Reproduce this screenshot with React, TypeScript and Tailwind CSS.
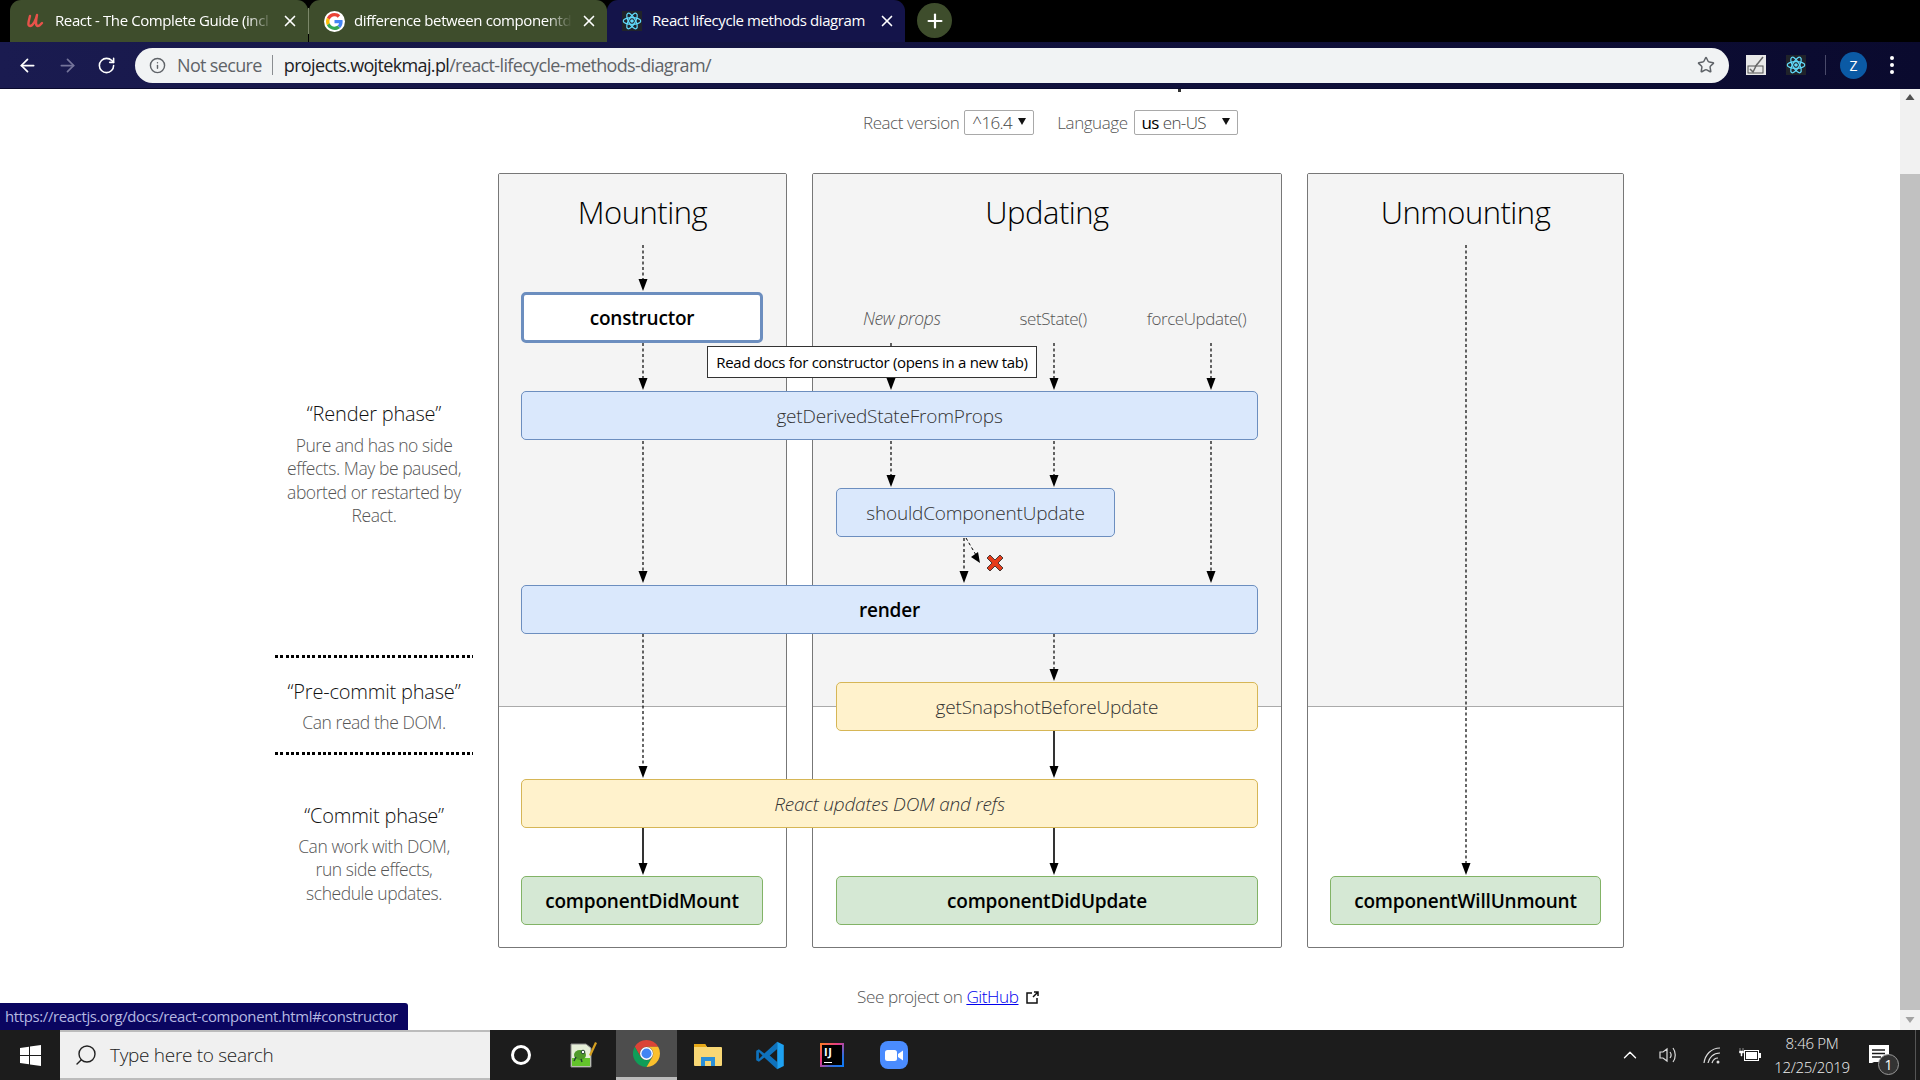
import React from "react";
import { ArrowLeft, ArrowRight, RotateCw, Info, Star, Search, ChevronUp, X, Plus } from "lucide-react";

const font = "font-['Open_Sans','Noto_Sans',sans-serif]";

function Atom({ size = 20 }: { size?: number }) {
  return (
    <svg width={size} height={size} viewBox="0 0 24 24" fill="none" stroke="#61dafb" strokeWidth="1.5">
      <rect width="24" height="24" fill="#20232a" stroke="none" />
      <circle cx="12" cy="12" r="2.2" fill="#61dafb" stroke="none" />
      <ellipse cx="12" cy="12" rx="10.5" ry="4" />
      <ellipse cx="12" cy="12" rx="10.5" ry="4" transform="rotate(60 12 12)" />
      <ellipse cx="12" cy="12" rx="10.5" ry="4" transform="rotate(120 12 12)" />
    </svg>
  );
}

function GoogleG() {
  return (
    <div className="w-[21px] h-[21px] rounded-full bg-white flex items-center justify-center">
      <svg width="17" height="17" viewBox="0 0 48 48">
        <path fill="#EA4335" d="M24 9.5c3.5 0 6.7 1.2 9.2 3.6l6.9-6.9C35.9 2.4 30.5 0 24 0 14.6 0 6.5 5.4 2.6 13.2l8 6.2C12.5 13.7 17.800 9.500 24 9.500z" />
        <path fill="#4285F4" d="M46.900 24.500c0-1.600-.2-3.100-.4-4.500H24v9h12.900c-.6 3-2.200 5.500-4.700 7.200l7.700 6c4.500-4.200 7-10.300 7-17.700z" />
        <path fill="#FBBC05" d="M10.500 28.600c-.5-1.400-.8-3-.8-4.600s.3-3.200.8-4.600l-8-6.200C.9 16.500 0 20.100 0 24s.9 7.500 2.600 10.800l7.900-6.200z" />
        <path fill="#34A853" d="M24 48c6.500 0 11.900-2.100 15.900-5.800l-7.700-6c-2.200 1.400-4.900 2.300-8.200 2.300-6.200 0-11.500-4.200-13.400-9.900l-8 6.200C6.500 42.600 14.600 48 24 48z" />
      </svg>
    </div>
  );
}

function Tab({ icon, title, active }: { icon: React.ReactNode; title: string; active?: boolean }) {
  return (
    <div className={`w-[298px] h-[42px] flex items-center pl-[15px] pr-[9px] rounded-t-[11px] ${active ? "bg-[#14144a]" : "bg-[#3e4d2c]"}`}>
      <div className="w-[24px] flex items-center shrink-0">{icon}</div>
      <span className={`flex-1 ml-[6px] text-[15px] leading-[20px] mb-[2px] text-white whitespace-nowrap overflow-hidden tracking-[-0.4px] ${active ? "" : "[mask-image:linear-gradient(90deg,#000_88%,transparent)]"}`}>{title}</span>
      <X className="ml-[8px] shrink-0 text-white" size={18} strokeWidth={2.2} />
    </div>
  );
}

function ChromeBar() {
  return (
    <div className={`${font} shrink-0`}>
      <div className="h-[42px] bg-black flex items-start pl-[10px]">
        <div className="flex items-start">
          <Tab
            title="React - The Complete Guide (incl"
            icon={
              <svg width="20" height="20" viewBox="0 0 20 20" fill="none" stroke="#e8524a" strokeWidth="2.4" strokeLinecap="round" strokeLinejoin="round">
                <path d="M5 5c-1 4-3 10 0 10 3 0 6-6 7-11-1 5-2 11 1 11 2 0 3-2 4-3" />
              </svg>
            }
          />
          <div className="w-[1px] h-[26px] mt-[8px] bg-[#7b8769]" />
          <Tab title="difference between componentdi" icon={<GoogleG />} />
          <Tab active title="React lifecycle methods diagram" icon={<Atom size={20} />} />
        </div>
        <div className="ml-[12px] mt-[3px] w-[35px] h-[35px] rounded-full bg-[#3e4d2c] flex items-center justify-center">
          <Plus className="text-white" size={22} strokeWidth={2.4} />
        </div>
      </div>
      <div className="h-[46px] bg-[linear-gradient(90deg,#1a1b50,#0a0a2e)] flex items-center">
        <div className="w-[135px] flex items-center pl-[17px] gap-[19px]">
          <ArrowLeft className="text-white" size={21} strokeWidth={2} />
          <ArrowRight className="text-[#74749a]" size={21} strokeWidth={2} />
          <RotateCw className="text-white" size={19} strokeWidth={2} />
        </div>
        <div className="w-[1594px] h-[35px] rounded-full bg-[#f1f3f4] flex items-center pl-[14px] pr-[14px]">
          <Info className="text-[#5f6368]" size={17} strokeWidth={2} />
          <span className="ml-[11px] text-[#5f6368] text-[18px] tracking-[-0.65px]">Not secure</span>
          <span className="ml-[10px] mr-[11px] w-[1px] h-[20px] bg-[#8a8d91]" />
          <span className="text-[18px] tracking-[-0.65px] text-[#202124]">
            projects.wojtekmaj.pl<span className="text-[#5f6368]">/react-lifecycle-methods-diagram/</span>
          </span>
          <Star className="ml-auto text-[#5f6368]" size={18} strokeWidth={2} />
        </div>
        <div className="flex-1 flex items-center pl-[17px]">
          <svg width="20" height="20" viewBox="0 0 20 20">
            <rect width="20" height="20" fill="#e8e8e8" />
            <rect x="2" y="11" width="15" height="7" fill="none" stroke="#555" />
            <path d="M4 14l3 3 4-8M17 2L9 12" stroke="#666" strokeWidth="1.5" fill="none" />
          </svg>
          <div className="ml-[20px] flex"><Atom size={20} /></div>
          <span className="ml-[19px] w-[1px] h-[20px] bg-[#4a4a6a]" />
          <div className="ml-[14px] w-[27px] h-[27px] rounded-full bg-[#0b5aa5] flex items-center justify-center text-white text-[14px]">Z</div>
          <div className="ml-[23px] flex flex-col gap-[3px]">
            <span className="w-[4px] h-[4px] rounded-full bg-white" />
            <span className="w-[4px] h-[4px] rounded-full bg-white" />
            <span className="w-[4px] h-[4px] rounded-full bg-white" />
          </div>
        </div>
      </div>
      <div className="h-[1px] bg-[#0a0a2e]" />
    </div>
  );
}

const Node = ({ cls, children }: { cls: string; children: React.ReactNode }) => (
  <div className={`${cls} flex items-center justify-center rounded-[5px] border z-10 pt-[2px] text-[19px] tracking-[-0.2px]`}>{children}</div>
);

const blue = "bg-[#dae8fc] border-[#6c8ebf] text-[#333] font-light";
const yellow = "bg-[#fff2cc] border-[#d6b656] text-[#333] font-light";
const green = "bg-[#d5e8d4] border-[#82b366] text-black font-semibold";

function Panel({ cls, title }: { cls: string; title: string }) {
  return (
    <div className={`${cls} row-start-1 row-end-[16] border border-[#777] rounded-[2px] overflow-hidden flex flex-col`}>
      <div className="h-[533px] bg-[#f4f4f4] border-b border-[#aaa] pt-[15px] text-center text-[31px] leading-[46px] font-light text-black tracking-[-0.5px]">{title}</div>
    </div>
  );
}

type A = [number, number, number, boolean?];
const arrows: A[] = [
  [643, 245, 291], [643, 343, 390], [643, 441, 583], [643, 634, 778], [643, 828, 875, true],
  [891, 343, 390], [891, 441, 487], [1054, 343, 390], [1054, 441, 487], [1211, 343, 390], [1211, 441, 583],
  [964, 538, 583], [1054, 634, 681], [1054, 731, 778, true], [1054, 828, 875, true], [1466, 245, 875],
];

function Arrows() {
  return (
    <svg className="absolute left-0 top-0 z-10 pointer-events-none" width="1349" height="775" viewBox="275 173 1349 775">
      {arrows.map(([x, a, b, solid], i) => (
        <g key={i}>
          <line x1={x} y1={a} x2={x} y2={b - 10} stroke="#000" strokeWidth={solid ? 1.6 : 1.2} strokeDasharray={solid ? undefined : "3 2.5"} />
          <path d={`M${x - 4.5} ${b - 12}h9l-4.5 12z`} fill="#000" />
        </g>
      ))}
      <line x1="966" y1="538" x2="976" y2="555" stroke="#000" strokeWidth="1" strokeDasharray="3 2.5" />
      <path d="M971 557l7-5 2 11z" fill="#000" />
      <path d="M990 555l5 5 5-5 3 3-5 5 5 5-3 3-5-5-5 5-3-3 5-5-5-5z" fill="#e53c1b" stroke="#222" strokeWidth="0.8" />
    </svg>
  );
}

function Phase({ h, title, lines, cls, gap }: { h: string; title: string; lines: string[]; cls: string; gap: string }) {
  return (
    <div className={`${h} ${cls} text-center`}>
      <div className="text-[20px] leading-[28px] text-[#111] font-light tracking-[-0.2px]">{title}</div>
      <div className={`${gap} text-[17.5px] leading-[23.3px] text-[#555] font-light tracking-[-0.45px]`}>
        {lines.map((l) => <div key={l}>{l}</div>)}
      </div>
    </div>
  );
}

const Dots = () => <div className="h-[3px] bg-[repeating-linear-gradient(90deg,#000_0,#000_3px,transparent_3px,transparent_5.33px)]" />;

function Diagram() {
  return (
    <div className="relative ml-[275px] w-[1349px] h-[775px] grid grid-cols-[198px_25px_23px_242px_24px_25px_24px_279px_143px_24px_25px_23px_271px_23px] grid-rows-[119px_51px_48px_49px_48px_49px_48px_49px_48px_49px_48px_49px_48px_49px_23px]">
      <div className="col-start-1 col-end-2 row-start-1 row-end-[16] flex flex-col">
        <Phase h="h-[482px]" cls="pt-[227px]" gap="mt-[6px]" title="“Render phase”" lines={["Pure and has no side", "effects. May be paused,", "aborted or restarted by", "React."]} />
        <Dots />
        <Phase h="h-[94px]" cls="pt-[20px]" gap="mt-[5px]" title="“Pre-commit phase”" lines={["Can read the DOM."]} />
        <Dots />
        <Phase h="h-[190px]" cls="pt-[47px]" gap="mt-[5px]" title="“Commit phase”" lines={["Can work with DOM,", "run side effects,", "schedule updates."]} />
      </div>

      <Panel cls="col-start-3 col-end-6" title="Mounting" />
      <Panel cls="col-start-7 col-end-11" title="Updating" />
      <Panel cls="col-start-12 col-end-15" title="Unmounting" />

      <div className="col-start-4 col-end-5 row-start-2 row-end-3 z-10 flex items-center justify-center bg-white border-[3px] border-[#6c8ebf] rounded-[5px] pt-[2px] text-[19px] font-semibold text-black tracking-[-0.2px]">constructor</div>
      <div className="col-start-8 col-end-10 row-start-2 row-end-3 flex items-center pt-[2px] text-[17px] text-[#555] font-light tracking-[-0.4px]">
        <span className="ml-[27px] italic text-[17.5px]">New props</span>
        <span className="ml-[79px]">setState()</span>
        <span className="ml-[60px]">forceUpdate()</span>
      </div>

      <Node cls={`col-start-4 col-end-10 row-start-4 row-end-5 ${blue}`}>getDerivedStateFromProps</Node>
      <Node cls={`col-start-8 col-end-9 row-start-6 row-end-7 ${blue}`}>shouldComponentUpdate</Node>
      <Node cls="col-start-4 col-end-10 row-start-8 row-end-9 bg-[#dae8fc] border-[#6c8ebf] text-black font-semibold">render</Node>
      <Node cls={`col-start-8 col-end-10 row-start-10 row-end-11 ${yellow}`}>getSnapshotBeforeUpdate</Node>
      <Node cls={`col-start-4 col-end-10 row-start-12 row-end-13 italic ${yellow}`}>React updates DOM and refs</Node>
      <Node cls={`col-start-4 col-end-5 row-start-14 row-end-15 ${green}`}>componentDidMount</Node>
      <Node cls={`col-start-8 col-end-10 row-start-14 row-end-15 ${green}`}>componentDidUpdate</Node>
      <Node cls={`col-start-13 col-end-14 row-start-14 row-end-15 ${green}`}>componentWillUnmount</Node>

      <Arrows />
      <div className="absolute left-[432px] top-[173px] z-20 w-[330px] h-[32px] bg-white border border-[#333] flex items-center justify-center text-[15px] text-black tracking-[-0.3px] whitespace-nowrap">
        Read docs for constructor (opens in a new tab)
      </div>
    </div>
  );
}

function Scrollbar() {
  return (
    <div className="w-[20px] shrink-0 bg-[#f1f1f1] flex flex-col items-center">
      <div className="h-[17px] flex items-center justify-center text-[#505050]">
        <svg width="10" height="7"><path d="M5 0l4.5 6h-9z" fill="currentColor" /></svg>
      </div>
      <div className="mt-[68px] h-[836px] w-full bg-[#c1c1c1]" />
      <div className="h-[19px] flex items-center justify-center text-[#a3a3a3]">
        <svg width="10" height="7"><path d="M5 7L.5 1h9z" fill="currentColor" /></svg>
      </div>
    </div>
  );
}

function Select({ w, children }: { w: string; children: React.ReactNode }) {
  return (
    <div className={`${w} h-[25px] border border-[#a9a9a9] rounded-[2px] bg-white flex items-center justify-between pl-[7px] pr-[7px] text-[17px] tracking-[-0.6px] text-[#444]`}>
      <span>{children}</span>
      <svg width="8" height="8" className="mb-[3px]"><path d="M0 1h8L4 8z" fill="#111" /></svg>
    </div>
  );
}

function Content() {
  return (
    <div className={`${font} relative flex-1 min-w-0 bg-white overflow-hidden`}>
      <div className="h-[3px] ml-[1177px] w-[6px] overflow-hidden"><div className="w-[3px] h-[3px] ml-[1px] bg-[#333]" /></div>
      <div className="flex items-center ml-[863px] mt-[18px] h-[25px] text-[17px] font-light text-[#555] tracking-[-0.45px]">
        <span>React version</span>
        <div className="ml-[5px]"><Select w="w-[70px]">^16.4</Select></div>
        <span className="ml-[23px]">Language</span>
        <div className="ml-[6px]"><Select w="w-[104px]"><span className="text-black font-normal">us</span> en-US</Select></div>
      </div>
      <div className="mt-[38px]"><Diagram /></div>
      <div className="mt-[37px] ml-[857px] flex items-center h-[24px] text-[17.2px] font-light text-[#555] tracking-[-0.45px]">
        See project on&nbsp;<span className="text-[#0000ee] underline">GitHub</span>
        <svg className="ml-[7px]" width="15" height="15" viewBox="0 0 15 15" fill="none" stroke="#111" strokeWidth="1.5">
          <path d="M7 3H2v10h10V8M8 7l5-5M9 2h4v4" />
        </svg>
      </div>
      <div className="absolute left-0 bottom-0 w-[408px] h-[27px] bg-[#0a0560] rounded-tr-[3px] flex items-center pl-[5px] text-[14.9px] text-[#b5b8e0] tracking-[-0.35px] whitespace-nowrap">
        https://reactjs.org/docs/react-component.html#constructor
      </div>
    </div>
  );
}

function TaskIcon({ children, active, w }: { children: React.ReactNode; active?: boolean; w: string }) {
  return (
    <div className={`${w} h-[50px] flex items-center justify-center ${active ? "bg-[#4d4d4d] border-b-[3px] border-[#bbb]" : ""}`}>{children}</div>
  );
}

function Taskbar() {
  return (
    <div className={`${font} h-[50px] shrink-0 bg-[#1c1c1c] flex items-center text-white`}>
      <div className="w-[60px] flex justify-center">
        <svg width="21" height="21" viewBox="0 0 21 21" fill="#fff">
          <path d="M0 3l9-1.3V10H0zM10 1.5L21 0v10H10zM0 11h9v8.300L0 18zM10 11h11v10l-11-1.500z" />
        </svg>
      </div>
      <div className="w-[430px] h-[50px] bg-[#f0f0f0] border-y-2 border-[#bcbcbc] flex items-center pl-[14px] text-[#222]">
        <Search size={24} strokeWidth={1.4} className="-scale-x-100" />
        <span className="ml-[12px] text-[19px] font-light text-[#222] tracking-[-0.3px]">Type here to search</span>
      </div>
      <div className="w-[1px]" />
      <div className="flex">
        <TaskIcon w="w-[60px]"><div className="w-[20px] h-[20px] rounded-full border-[3px] border-white" /></TaskIcon>
        <TaskIcon w="w-[65px]">
          <svg width="28" height="28" viewBox="0 0 28 28">
            <path d="M1 3h15l5 4v19H1z" fill="#e6efd8" stroke="#8a8a8a" />
            <path d="M2 17h18v8H2z" fill="#63c42b" />
            <ellipse cx="10" cy="14" rx="6" ry="5" fill="#4f9a2a" />
            <circle cx="13" cy="11" r="1.8" fill="#fff" stroke="#243" />
            <path d="M6 16l-2 4M11 18l1 3" stroke="#243" strokeWidth="1.5" />
            <path d="M25 1l2 1-6 13-2-1z" fill="#d6a020" />
          </svg>
        </TaskIcon>
        <TaskIcon w="w-[61px]" active>
          <svg width="27" height="27" viewBox="0 0 48 48">
            <path d="M24 0A24 24 0 0 1 44.78 12H24A12 12 0 0 0 13.61 30L3.2 12A24 24 0 0 1 24 0z" fill="#db4437" />
            <path d="M3.2 12A24 24 0 0 0 24 48L34.39 30A12 12 0 0 1 13.61 30z" fill="#0f9d58" />
            <path d="M44.78 12A24 24 0 0 1 24 48L34.39 30A12 12 0 0 0 24 12z" fill="#fbc02d" />
            <circle cx="24" cy="24" r="11.5" fill="#fff" />
            <circle cx="24" cy="24" r="9" fill="#4285f4" />
          </svg>
        </TaskIcon>
        <TaskIcon w="w-[62px]">
          <svg width="28" height="24" viewBox="0 0 28 24">
            <path d="M0 2a1 1 0 0 1 1-1h10l2 3h14a1 1 0 0 1 1 1v17a1 1 0 0 1-1 1H1a1 1 0 0 1-1-1z" fill="#f8d775" />
            <path d="M0 2a1 1 0 0 1 1-1h10l2 3H0z" fill="#e6a817" />
            <path d="M7 23v-9h14v9h-4v-5h-6v5z" fill="#2a8fd8" />
          </svg>
        </TaskIcon>
        <TaskIcon w="w-[62px]">
          <svg width="30" height="31" viewBox="0 0 100 100">
            <path d="M74 4L31 43 13 29 4 34v32l9 5 18-14 43 39V72L49 50 74 28zM13 38l12 12-12 12z" fill="#0f72bc" fillRule="evenodd" />
            <path d="M74 4l22 11v70L74 96z" fill="#1ea1f1" />
          </svg>
        </TaskIcon>
        <TaskIcon w="w-[62px]">
          <div className="w-[24px] h-[24px] p-[2px] bg-[linear-gradient(135deg,#fc801d_0%,#e5398a_40%,#2a6fe0_75%,#087cfa_100%)]">
            <div className="w-full h-full bg-black relative pl-[2px] text-[11px] leading-[13px] font-bold text-white tracking-[0.5px]">
              IJ
              <div className="absolute left-[2px] bottom-[2px] w-[8px] h-[1.5px] bg-white" />
            </div>
          </div>
        </TaskIcon>
        <TaskIcon w="w-[62px]">
          <div className="w-[28px] h-[28px] rounded-[8px] bg-[#4a8cff] flex items-center justify-center">
            <svg width="18" height="11" viewBox="0 0 18 11" fill="#fff">
              <rect width="12" height="11" rx="2.5" />
              <path d="M13 4l5-3.500v10L13 7z" />
            </svg>
          </div>
        </TaskIcon>
      </div>
      <div className="ml-auto flex items-center text-white">
        <ChevronUp size={22} strokeWidth={1.5} />
        <svg className="ml-[17px]" width="20" height="20" viewBox="0 0 20 20" fill="none" stroke="#ddd" strokeWidth="1.2">
          <path d="M2 7h3l4-3v12l-4-3H2zM12 7c1.500 2 1.500 4 0 6M15 3c3 4 3 10 0 14" />
        </svg>
        <svg className="ml-[24px]" width="20" height="20" viewBox="0 0 20 20" fill="none" stroke="#ddd" strokeWidth="1.2">
          <path d="M2 18C3 10 9 3 18 3M6 18c1-5 5-10 12-10M10 18c1-3 3-5 6-5" />
          <circle cx="16" cy="17" r="1.500" fill="#ddd" stroke="none" />
        </svg>
        <svg className="ml-[17px]" width="22" height="16" viewBox="0 0 22 16">
          <rect x="5.500" y="3.500" width="14" height="10" fill="#1c1c1c" stroke="#fff" />
          <rect x="7" y="5" width="11" height="7" fill="#fff" />
          <rect x="20" y="6" width="2" height="5" fill="#fff" />
          <path d="M1 1v3M4 1v3M.5 4h4v2H3v3H2V6H.5z" fill="#fff" stroke="#fff" strokeWidth="0.500" />
        </svg>
        <div className="ml-[6px] w-[90px] text-center text-[15px] leading-[24px] tracking-[-0.3px] text-[#eee] font-light">
          <div>8:46 PM</div>
          <div>12/25/2019</div>
        </div>
        <div className="relative ml-[12px] w-[20px] h-[34px]">
          <svg width="20" height="18" viewBox="0 0 20 18" className="mt-[7px]">
            <path d="M0 0h20v17H5l-2 1H0z" fill="#fff" />
            <path d="M3 5h13M3 8.500h13M3 12h9" stroke="#1c1c1c" strokeWidth="1.500" />
          </svg>
          <div className="absolute left-[9px] top-[16px] w-[21px] h-[21px] rounded-full bg-[#333] border border-[#999] flex items-center justify-center text-[14px] text-white">1</div>
        </div>
        <div className="ml-[26px] mr-[4px] w-[1px] h-[50px] bg-[#555]" />
      </div>
    </div>
  );
}

export default function App() {
  return (
    <div className="w-[1920px] h-[1080px] flex flex-col overflow-hidden bg-white">
      <ChromeBar />
      <div className="flex-1 min-h-0 flex">
        <Content />
        <Scrollbar />
      </div>
      <Taskbar />
    </div>
  );
}
